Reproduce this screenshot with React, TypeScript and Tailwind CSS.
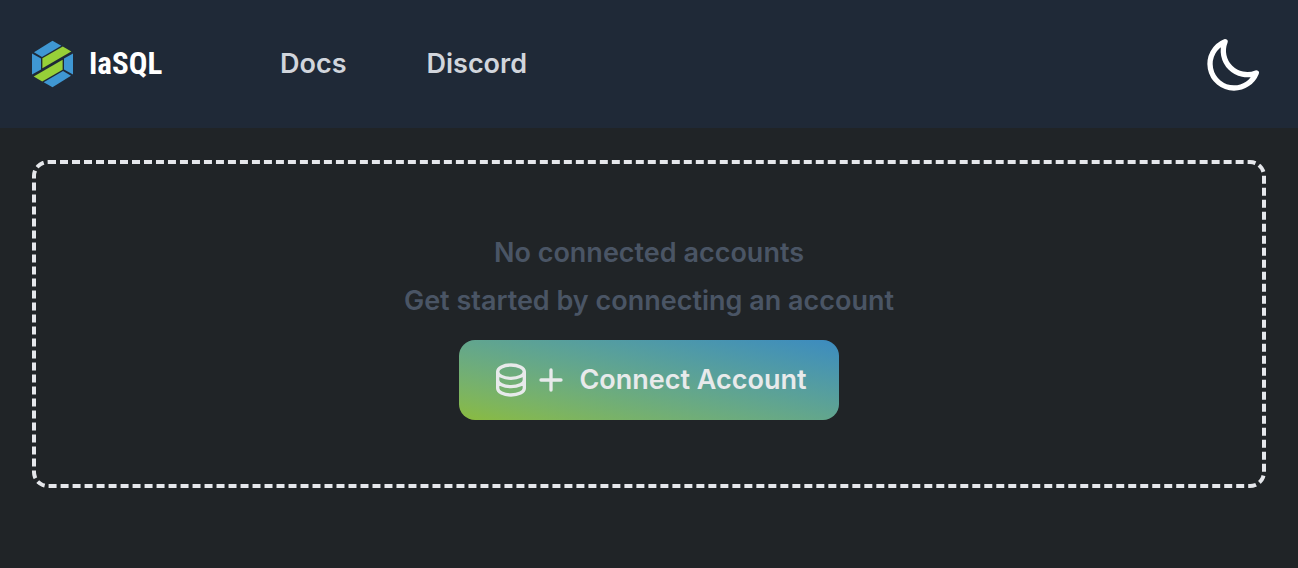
import React from 'react';

const navigation = [
  { name: 'Docs', href: '#docs' },
  { name: 'Discord', href: '#discord' },
];

interface IconProps {
  className?: string;
  path: string;
}

const Icon: React.FC<IconProps> = ({ className, path }) => (
  <svg
    className={className}
    fill="none"
    viewBox="0 0 24 24"
    stroke="currentColor"
    strokeWidth={2}
    strokeLinecap="round"
    strokeLinejoin="round"
    aria-hidden="true"
  >
    <path d={path} />
  </svg>
);

const MOON = 'M20.354 15.354A9 9 0 018.646 3.646 9.003 9.003 0 0012 21a9.003 9.003 0 008.354-5.646z';
const DATABASE =
  'M4 7v10c0 2.21 3.582 4 8 4s8-1.79 8-4V7M4 7c0 2.21 3.582 4 8 4s8-1.79 8-4M4 7c0-2.21 3.582-4 8-4s8 1.79 8 4m0 5c0 2.21-3.582 4-8 4s-8-1.79-8-4';
const PLUS = 'M12 6v6m0 0v6m0-6h6m-6 0H6';

const Logo: React.FC = () => (
  <a href="#home" className="flex w-32 items-center gap-4 whitespace-nowrap text-white">
    <svg className="h-12 w-[41px] shrink-0" viewBox="0 0 41 48" aria-hidden="true">
      <g fill="#3f97d3">
        <path d="M20.5 0.8L29.3 5.8L10 17L2 12.2Z" />
        <path d="M0 13.4L9 18.6V29.4L0 34.6Z" />
        <path d="M41 13.4V34.6L32 29.4V18.6Z" />
        <path d="M20.5 47.2L11.7 42.2L31 31L39 35.8Z" />
      </g>
      <g fill="#97d038">
        <path d="M30.8 6.6L39.3 11.6L10.4 28.2V18.3Z" />
        <path d="M10.2 41.4L1.7 36.4L30.6 19.8V29.7Z" />
      </g>
    </svg>
    <span className="font-['Roboto_Condensed',Roboto,sans-serif] text-[31px] leading-10 font-bold">
      IaSQL
    </span>
  </a>
);

const App: React.FC = () => {
  return (
    <div className="min-h-screen bg-[#202427] font-[Inter,sans-serif] text-[27px] leading-[42px] font-semibold">
      <header className="flex h-32 items-center justify-between bg-[#1f2937] px-8">
        <div className="flex items-center gap-20">
          <Logo />
          <nav className="flex gap-20 px-10">
            {navigation.map((item) => (
              <a key={item.name} href={item.href} className="text-gray-300">
                {item.name}
              </a>
            ))}
          </nav>
        </div>
        <button type="button" aria-label="Toggle dark mode" className="text-white">
          <Icon className="size-16" path={MOON} />
        </button>
      </header>

      <main className="p-8">
        <section className="flex flex-col items-center rounded-2xl border-4 border-dashed border-gray-200 px-8 py-16 text-center">
          <h3 className="mt-1 text-gray-600">No connected accounts</h3>
          <p className="mt-1.5 text-gray-600">Get started by connecting an account</p>
          <button
            type="button"
            className="mt-[18px] flex h-20 items-center rounded-2xl bg-linear-to-tr from-[#8abb3d] to-[#3c8bc0] px-8 text-[#e8eaeb]"
          >
            <Icon className="size-10" path={DATABASE} />
            <Icon className="mr-2 size-10" path={PLUS} />
            Connect Account
          </button>
        </section>
      </main>
    </div>
  );
};

export default App;
